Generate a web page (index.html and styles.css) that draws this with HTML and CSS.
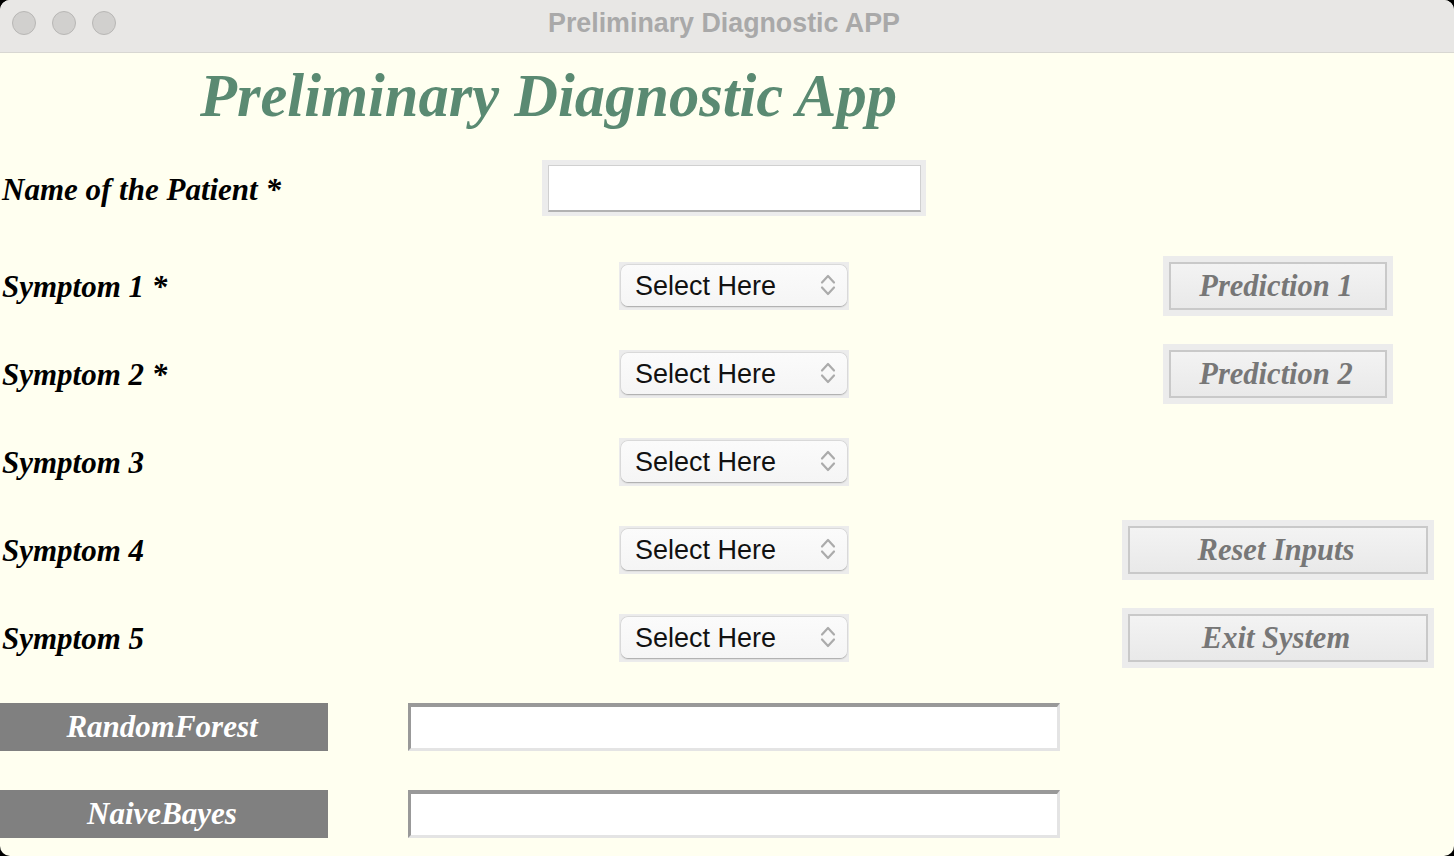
FILE: index.html
```html
<!DOCTYPE html>
<html lang="en">
<head>
<meta charset="utf-8">
<title>Preliminary Diagnostic APP</title>
<link rel="stylesheet" href="styles.css">
</head>
<body>
<div class="window">
  <header class="titlebar">
    <div class="lights">
      <span class="light"></span>
      <span class="light"></span>
      <span class="light"></span>
    </div>
    <div class="wtitle">Preliminary Diagnostic APP</div>
    <div></div>
  </header>
  <main class="app">
    <h1 class="heading">Preliminary Diagnostic App</h1>

    <div class="row row-name">
      <label class="lbl">Name of the Patient *</label>
      <div class="entry-frame"><input class="entry" type="text"></div>
    </div>

    <div class="row">
      <label class="lbl">Symptom 1 *</label>
      <div class="sel-frame"><div class="sel"><span>Select Here</span><svg class="chev" viewBox="0 0 16 24" width="16" height="24"><path d="M2 9.5 L8 3 L14 9.5 M2 14.5 L8 21 L14 14.5"/></svg></div></div>
      <div class="btn-frame"><button class="btn">Prediction 1</button></div>
    </div>

    <div class="row">
      <label class="lbl">Symptom 2 *</label>
      <div class="sel-frame"><div class="sel"><span>Select Here</span><svg class="chev" viewBox="0 0 16 24" width="16" height="24"><path d="M2 9.5 L8 3 L14 9.5 M2 14.5 L8 21 L14 14.5"/></svg></div></div>
      <div class="btn-frame"><button class="btn">Prediction 2</button></div>
    </div>

    <div class="row">
      <label class="lbl">Symptom 3</label>
      <div class="sel-frame"><div class="sel"><span>Select Here</span><svg class="chev" viewBox="0 0 16 24" width="16" height="24"><path d="M2 9.5 L8 3 L14 9.5 M2 14.5 L8 21 L14 14.5"/></svg></div></div>
    </div>

    <div class="row">
      <label class="lbl">Symptom 4</label>
      <div class="sel-frame"><div class="sel"><span>Select Here</span><svg class="chev" viewBox="0 0 16 24" width="16" height="24"><path d="M2 9.5 L8 3 L14 9.5 M2 14.5 L8 21 L14 14.5"/></svg></div></div>
      <div class="btn-frame btn-frame-wide"><button class="btn">Reset Inputs</button></div>
    </div>

    <div class="row">
      <label class="lbl">Symptom 5</label>
      <div class="sel-frame"><div class="sel"><span>Select Here</span><svg class="chev" viewBox="0 0 16 24" width="16" height="24"><path d="M2 9.5 L8 3 L14 9.5 M2 14.5 L8 21 L14 14.5"/></svg></div></div>
      <div class="btn-frame btn-frame-wide"><button class="btn">Exit System</button></div>
    </div>

    <div class="row row-out row-rf">
      <div class="tag">RandomForest</div>
      <input class="out" type="text">
    </div>

    <div class="row row-out">
      <div class="tag">NaiveBayes</div>
      <input class="out" type="text">
    </div>
  </main>
</div>
</body>
</html>
```
FILE: styles.css
```css
* { box-sizing: border-box; }

html, body {
  margin: 0;
  padding: 0;
  background: #000;
  width: 1454px;
  height: 856px;
  overflow: hidden;
}

.window {
  width: 1454px;
  height: 856px;
  background: #FFFFF0;
  border-radius: 10px;
  overflow: hidden;
  display: flex;
  flex-direction: column;
}

.titlebar {
  height: 53px;
  flex: 0 0 53px;
  background: #E8E7E5;
  border-bottom: 1px solid #D8D7D2;
  display: grid;
  grid-template-columns: 1fr auto 1fr;
  align-items: center;
  padding-bottom: 6px;
}

.lights {
  display: flex;
  gap: 16px;
  padding-left: 12px;
}

.light {
  width: 24px;
  height: 24px;
  border-radius: 50%;
  background: #D1D0CE;
  border: 1px solid #B8B7B5;
}

.wtitle {
  font-family: "Liberation Sans", Arial, sans-serif;
  font-weight: bold;
  font-size: 26.8px;
  color: #A9A9A9;
  padding-right: 6px;
}

.app {
  display: flex;
  flex-direction: column;
}

.heading {
  margin: 0;
  height: 93px;
  display: flex;
  align-items: center;
  padding-left: 200px;
  padding-bottom: 8px;
  font-family: "Liberation Serif", "Times New Roman", serif;
  font-style: italic;
  font-weight: bold;
  font-size: 60.5px;
  color: #5A8A72;
}

.row {
  height: 88px;
  display: grid;
  grid-template-columns: 346px 776px 312px;
  align-items: center;
}

.row-name { margin-bottom: 9px; }
.row-rf { height: 87px; }

.lbl {
  font-family: "Liberation Serif", "Times New Roman", serif;
  font-style: italic;
  font-weight: bold;
  font-size: 31px;
  color: #000;
  padding-left: 2px;
  white-space: nowrap;
}

.entry-frame {
  justify-self: center;
  width: 384px;
  height: 56px;
  background: #ECECEC;
  padding: 5px 5px 4px 6px;
  margin-bottom: 4px;
}

.entry {
  display: block;
  width: 100%;
  height: 100%;
  margin: 0;
  background: #fff;
  border: 1px solid #D0D0D0;
  border-bottom: 2px solid #B2B2B2;
  outline: none;
  font-size: 20px;
}

.sel-frame {
  justify-self: center;
  width: 230px;
  height: 48px;
  background: #ECECEC;
  padding: 3px 2px 4px 2px;
  margin-bottom: 2px;
}

.sel {
  height: 100%;
  border-radius: 7px;
  background: linear-gradient(#FBFBFB, #F5F5F5);
  box-shadow: 0 0.5px 1.5px rgba(0, 0, 0, 0.28), 0 0 0 0.5px rgba(0, 0, 0, 0.06);
  display: flex;
  align-items: center;
  justify-content: space-between;
  padding: 2px 11px 0 14px;
  font-family: "Liberation Sans", Arial, sans-serif;
  font-size: 27px;
  color: #111;
}

.chev {
  fill: none;
  stroke: #ABABAB;
  stroke-width: 2.2;
  stroke-linecap: round;
  stroke-linejoin: round;
  margin-bottom: 4px;
}

.btn-frame {
  justify-self: center;
  width: 230px;
  height: 60px;
  background: #ECECEC;
  padding: 6px;
  margin-bottom: 2px;
}

.btn-frame-wide { width: 312px; }

.btn {
  display: block;
  width: 100%;
  height: 100%;
  margin: 0;
  padding: 0 4px 0 0;
  border: 2px solid #C9C9C9;
  background: linear-gradient(#F3F3F3, #E9E9E9);
  font-family: "Liberation Serif", "Times New Roman", serif;
  font-style: italic;
  font-weight: bold;
  font-size: 30.5px;
  color: #777777;
  text-align: center;
}

.tag {
  width: 328px;
  height: 48px;
  background: #808080;
  color: #fff;
  display: flex;
  align-items: center;
  justify-content: center;
  padding-right: 4px;
  font-family: "Liberation Serif", "Times New Roman", serif;
  font-style: italic;
  font-weight: bold;
  font-size: 31px;
}

.out {
  justify-self: center;
  display: block;
  width: 652px;
  height: 48px;
  margin: 0;
  background: #fff;
  border-style: solid;
  border-width: 4px 3px 3px 3px;
  border-color: #999999 #E4E4E4 #E4E4E4 #999999;
  outline: none;
  font-size: 20px;
}
```
